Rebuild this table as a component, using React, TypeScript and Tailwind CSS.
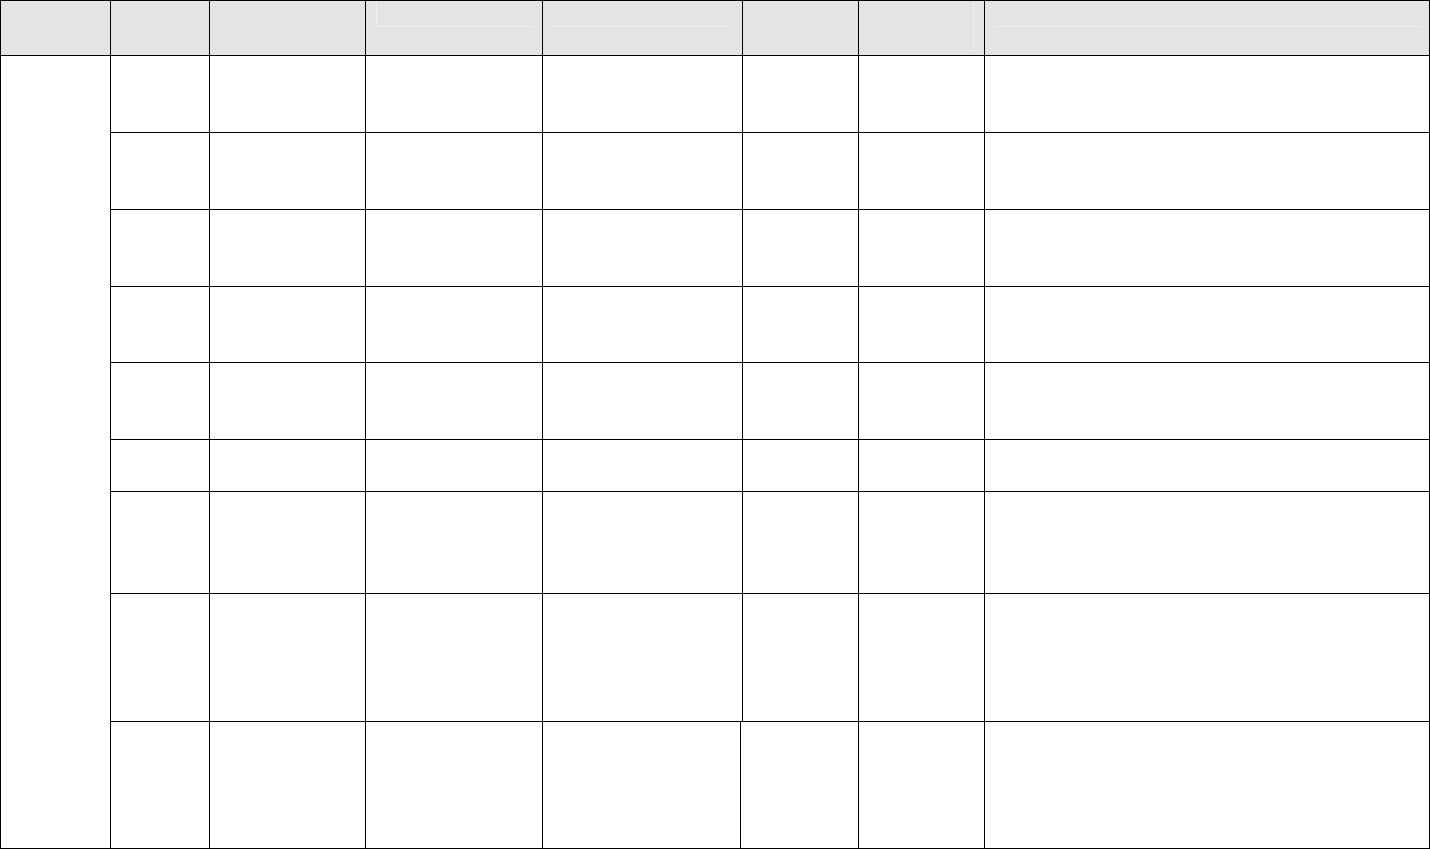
const COLS = [99, 156, 177, 200, 116, 126, 445];
// the last row's fifth rule sits 2px further left than the rows above
const LAST_COLS = [99, 156, 177, 198, 118, 126, 445];
const ROWS = [77, 77, 77, 76, 77, 52, 102, 128];

// header cells after the first; each may carry a faint inner rule like the source doc
function HeaderCell({ width, index }: { width: number; index: number }) {
  return (
    <div
      className="shrink-0 border-r border-b border-black bg-[#e4e4e4]"
      style={{ width }}
    >
      {index === 2 && (
        <div className="ml-[10px] mt-[1px] h-[25px] w-[157px] border-l border-b border-[#f1f1f1]" />
      )}
      {index === 3 && <div className="ml-[10px] h-[26px] w-[178px] border-b border-[#f1f1f1]" />}
      {index === 5 && <div className="ml-[114px] h-[51px] border-l border-[#eeeeee]" />}
      {index === 6 && <div className="ml-[10px] h-[26px] w-[425px] border-b border-[#f1f1f1]" />}
    </div>
  );
}

function Row({ height, cols }: { height: number; cols: number[] }) {
  return (
    <div className="flex" style={{ height }}>
      {cols.map((w, i) => (
        <div key={i} className="shrink-0 border-r border-b border-black bg-white" style={{ width: w }} />
      ))}
    </div>
  );
}

export default function App() {
  return (
    <div className="min-h-[849px] w-[1430px] bg-white">
      <div className="w-[1430px] border-l border-t border-black">
        {/* Header */}
        <div className="flex h-[55px]">
          <div className="w-[110px] shrink-0 border-r border-b border-black bg-[#e4e4e4]" />
          {COLS.map((w, i) => (
            <HeaderCell key={i} width={w} index={i} />
          ))}
        </div>

        {/* Body */}
        <div className="flex">
          <div className="w-[110px] shrink-0 border-r border-b border-black bg-white" />
          <div className="flex flex-col">
            {ROWS.map((h, i) => (
              <Row key={i} height={h} cols={COLS} />
            ))}
            <Row height={127} cols={LAST_COLS} />
          </div>
        </div>
      </div>
    </div>
  );
}
